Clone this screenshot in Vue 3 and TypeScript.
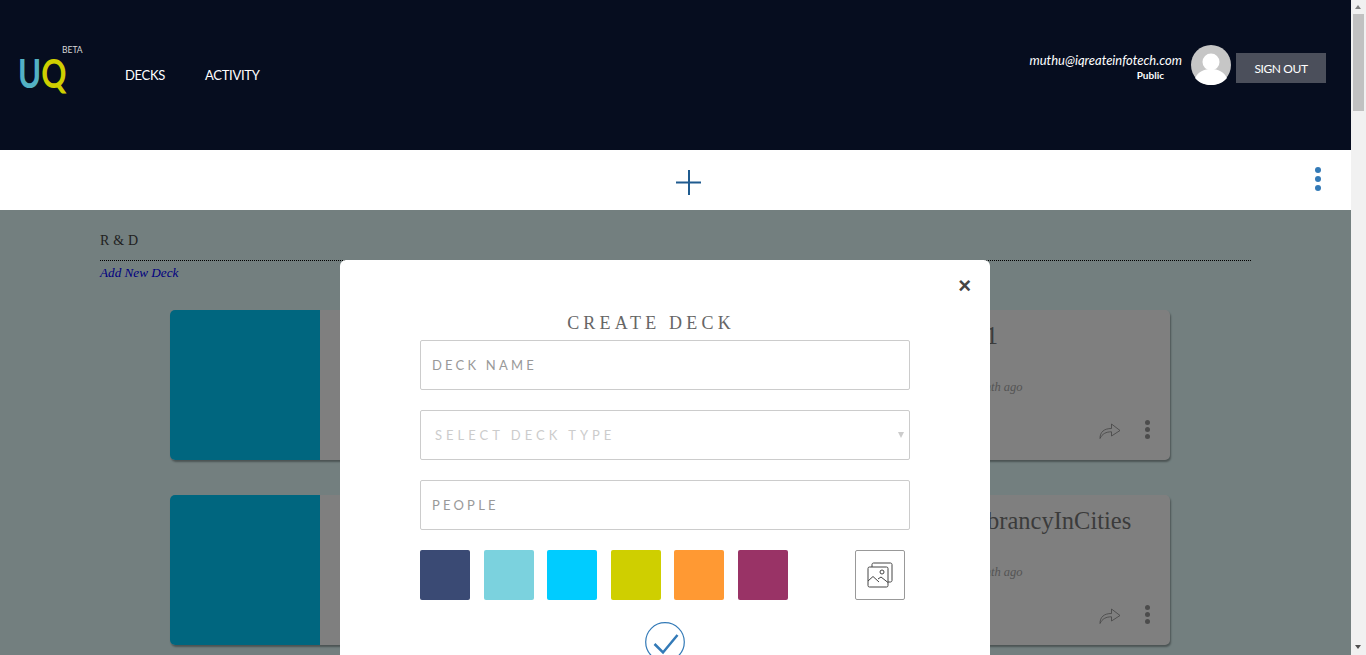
<template>
  <div class="page">
    <div class="main">
      <header class="top-bar">
        <div class="logo">
          <span class="logo-beta">BETA</span>
          <span class="logo-mark"><span class="logo-u">U</span><span class="logo-q">Q</span></span>
        </div>
        <nav class="nav">
          <a v-for="item in navItems" :key="item" class="nav-link">{{ item }}</a>
        </nav>
        <div class="user">
          <div class="user-info">
            <span class="user-mail">muthu@iqreateinfotech.com</span>
            <span class="user-role">Public</span>
          </div>
          <svg class="avatar" viewBox="0 0 40 40">
            <circle cx="20" cy="20" r="20" fill="#c6c6c6" />
            <circle cx="20" cy="17" r="8.5" fill="#fff" />
            <path d="M4 33c3-6 9-9 16-9s13 3 16 9c-3.600 4.400-9.500 7-16 7S7.600 37.400 4 33z" fill="#fff" />
          </svg>
          <button class="sign-out">SIGN OUT</button>
        </div>
      </header>

      <div class="tool-bar">
        <svg class="plus" viewBox="0 0 26 26">
          <path d="M13 0v25M0 12.500h25" stroke="#1f5b8f" stroke-width="2" fill="none" />
        </svg>
        <span class="dots dots-blue"><i></i><i></i><i></i></span>
      </div>

      <section class="content">
        <div class="group-title">R &amp; D</div>
        <a class="add-link">Add New Deck</a>
        <div class="card-list">
          <article v-for="deck in decks" :key="deck.name" class="card">
            <div class="card-thumb"></div>
            <div></div>
            <div class="card-info">
              <h3 class="card-title">{{ deck.name }}</h3>
              <p class="card-time">1 month ago</p>
              <div class="card-actions">
                <svg class="share" viewBox="0 0 22 18">
                  <path d="M1 17.500C1 11 5 7.500 12.500 7.500V3l8.500 6.500-8.500 5.500v-4.200C7 10.800 3.200 12.800 1 17.500z" fill="none" stroke="#888" stroke-width="0.800" />
                </svg>
                <span class="dots dots-dark"><i></i><i></i><i></i></span>
              </div>
            </div>
          </article>
        </div>

        <div class="overlay">
          <div class="modal">
            <span class="close">&times;</span>
            <h2 class="modal-title">CREATE DECK</h2>
            <div class="field field-text">DECK NAME</div>
            <div class="field field-select">
              <span>SELECT DECK TYPE</span>
              <i class="caret"></i>
            </div>
            <div class="field field-text">PEOPLE</div>
            <div class="picker">
              <div class="swatches">
                <span v-for="c in swatches" :key="c" class="swatch" :style="{ background: c }"></span>
              </div>
              <button class="image-btn">
                <svg viewBox="0 0 26 26" width="26" height="26">
                  <g fill="none" stroke="#444" stroke-width="1">
                    <path d="M5 5V2.500C5 1.700 5.700 1 6.500 1h17C24.300 1 25 1.700 25 2.500v16c0 .8-.7 1.500-1.500 1.500H21" />
                    <rect x="1" y="5" width="20" height="20" rx="1.500" />
                    <circle cx="15" cy="10" r="2" />
                    <path d="M1 19l5-4.500 6 5.500M11 17l3-2 7 5.500" />
                  </g>
                </svg>
              </button>
            </div>
            <svg class="confirm" viewBox="0 0 40 40">
              <circle cx="20" cy="20" r="19.300" fill="none" stroke="#337ab7" stroke-width="1.200" />
              <path d="M9.500 22l8.500 8.500L32.500 13" fill="none" stroke="#337ab7" stroke-width="2.500" />
            </svg>
          </div>
        </div>
      </section>
    </div>

    <div class="scrollbar">
      <i class="scroll-arrow-up"></i>
      <span class="scroll-thumb"></span>
      <i class="scroll-arrow"></i>
    </div>
  </div>
</template>

<script setup lang="ts">
const navItems: string[] = ['DECKS', 'ACTIVITY']

const decks = [{ name: 'M1' }, { name: 'VibrancyInCities' }]

const swatches: string[] = ['#3a4a74', '#7bd2de', '#00ccff', '#cfcf00', '#ff9933', '#993366']
</script>

<style>
html,
body {
  margin: 0;
  overflow: hidden;
}
</style>

<style scoped>
.page {
  display: flex;
  height: 100vh;
  overflow: hidden;
  font-family: 'Lato', sans-serif;
}

.main {
  flex: 1;
  min-width: 0;
  display: flex;
  flex-direction: column;
}

.top-bar {
  height: 150px;
  flex: none;
  background: #060d1f;
  display: flex;
  align-items: center;
  padding: 0 25px 0 19px;
  color: #fff;
}

.logo {
  width: 106px;
  display: flex;
  flex-direction: column;
  margin-top: -14px;
}

.logo-beta {
  font-size: 8.500px;
  line-height: 10px;
  margin-left: 43px;
  color: #d8d8d8;
}

.logo-mark {
  display: block;
  margin-left: -1px;
  font-size: 40px;
  line-height: 36px;
  font-weight: 700;
  white-space: nowrap;
  transform: scaleX(0.78);
  transform-origin: left center;
}

.logo-u {
  color: #53b1c4;
}

.logo-q {
  color: #cfcf00;
}

.nav {
  display: flex;
  gap: 40px;
  margin-top: -1px;
}

.nav-link {
  font-size: 13px;
  letter-spacing: -0.3px;
  color: #fff;
}

.user {
  margin-left: auto;
  display: flex;
  align-items: center;
  margin-top: -20px;
}

.user-info {
  display: flex;
  flex-direction: column;
  align-items: flex-end;
  margin-right: 9px;
  margin-top: 4px;
}

.user-mail {
  font-size: 13px;
  line-height: 16px;
  font-style: italic;
}

.user-role {
  font-size: 10px;
  line-height: 14px;
  font-weight: 700;
  margin-right: 18px;
}

.avatar {
  width: 40px;
  height: 40px;
}

.sign-out {
  width: 90px;
  height: 30px;
  margin-left: 5px;
  margin-top: 6px;
  border: 0;
  background: #4b4f5b;
  color: #fff;
  font-family: inherit;
  font-size: 12px;
  letter-spacing: -0.4px;
}

.tool-bar {
  height: 60px;
  flex: none;
  background: #fff;
  display: flex;
  align-items: center;
  justify-content: center;
  position: relative;
}

.plus {
  width: 26px;
  height: 26px;
  margin: 5px 0 0 26px;
}

.dots {
  display: flex;
  flex-direction: column;
  align-items: center;
}

.dots i {
  display: block;
  border-radius: 50%;
}

.dots-blue {
  position: absolute;
  right: 30px;
  top: 17px;
  gap: 3px;
}

.dots-blue i {
  width: 6px;
  height: 6px;
  background: #337ab7;
}

.dots-dark {
  gap: 2px;
}

.dots-dark i {
  width: 5px;
  height: 5px;
  background: #999;
}

.content {
  flex: 1;
  min-height: 0;
  position: relative;
  overflow: hidden;
  background: #e6ffff;
  padding: 23px 100px 0;
  font-family: 'Liberation Serif', serif;
}

.group-title {
  height: 27px;
  font-size: 14px;
  line-height: 16px;
  letter-spacing: 0.2px;
  border-bottom: 1px dotted #000;
  color: #444;
}

.add-link {
  display: block;
  margin-top: 4px;
  font-size: 13.200px;
  line-height: 16px;
  font-style: italic;
  color: #0000ff;
}

.card-list {
  display: flex;
  flex-direction: column;
  gap: 35px;
  margin: 29px 81px 0 70px;
}

.card {
  height: 150px;
  flex: none;
  display: grid;
  grid-template-columns: 150px 1fr 210px;
  background: #fff;
  border-radius: 5px;
  box-shadow: 1px 2px 2px rgba(0, 0, 0, 0.35);
  overflow: hidden;
}

.card-thumb {
  background: #00ccff;
}

.card-info {
  display: flex;
  flex-direction: column;
  color: #777;
}

.card-title {
  margin: 12px 0 0;
  padding-left: 4px;
  font-size: 24.500px;
  line-height: 28px;
  font-weight: 400;
  white-space: nowrap;
}

.card-time {
  margin: 30px 0 0;
  font-size: 12.500px;
  line-height: 14px;
  font-style: italic;
  color: #aaa;
}

.card-actions {
  margin-top: 26px;
  display: flex;
  align-items: center;
  justify-content: flex-end;
  gap: 24px;
  padding-right: 20px;
}

.share {
  width: 22px;
  height: 18px;
}

.overlay {
  position: absolute;
  inset: 0;
  background: rgba(0, 0, 0, 0.5);
  overflow: hidden;
}

.modal {
  position: absolute;
  left: 340px;
  top: 50px;
  width: 650px;
  box-sizing: border-box;
  padding: 53px 80px 30px;
  background: #fff;
  border-radius: 6px;
  display: flex;
  flex-direction: column;
}

.close {
  position: absolute;
  right: 19px;
  top: 12px;
  font-family: 'Liberation Sans', sans-serif;
  font-size: 22px;
  line-height: 28px;
  font-weight: 700;
  color: #444;
}

.modal-title {
  margin: 0;
  padding-right: 28px;
  font-size: 18px;
  line-height: 20px;
  font-weight: 400;
  letter-spacing: 4.200px;
  text-align: center;
  color: #666;
}

.field {
  height: 50px;
  box-sizing: border-box;
  border: 1px solid #ccc;
  border-radius: 2px;
  display: flex;
  align-items: center;
  font-family: 'Lato', sans-serif;
  font-size: 13px;
  margin-top: 20px;
}

.field-text {
  padding-left: 11px;
  color: #999;
  letter-spacing: 3.200px;
}

.modal-title + .field {
  margin-top: 7px;
}

.field-select {
  padding-left: 14px;
  justify-content: space-between;
  color: #ccc;
  letter-spacing: 4px;
}

.caret {
  width: 0;
  height: 0;
  margin-right: 5px;
  border-left: 3px solid transparent;
  border-right: 3px solid transparent;
  border-top: 6px solid #ccc;
}

.picker {
  margin-top: 20px;
  display: flex;
  align-items: center;
  justify-content: space-between;
  padding-right: 5px;
}

.swatches {
  display: flex;
  gap: 13.500px;
}

.swatch {
  width: 50px;
  height: 50px;
  border-radius: 2px;
}

.image-btn {
  width: 50px;
  height: 50px;
  padding: 0;
  border: 1px solid #999;
  border-radius: 2px;
  background: #fff;
  display: flex;
  align-items: center;
  justify-content: center;
}

.confirm {
  width: 40px;
  height: 40px;
  margin: 22px auto 0;
}

.scrollbar {
  width: 15px;
  flex: none;
  background: #f1f1f1;
  position: relative;
  display: flex;
  flex-direction: column;
  align-items: center;
}

.scroll-arrow-up {
  position: absolute;
  top: 5px;
  left: 4px;
  width: 0;
  height: 0;
  border-left: 3.500px solid transparent;
  border-right: 3.500px solid transparent;
  border-bottom: 4px solid #808080;
}

.scroll-thumb {
  width: 11px;
  height: 97px;
  margin-top: 14px;
  background: #c1c1c1;
}

.scroll-arrow {
  position: absolute;
  bottom: 6px;
  left: 4px;
  width: 0;
  height: 0;
  border-left: 3.500px solid transparent;
  border-right: 3.500px solid transparent;
  border-top: 4px solid #505050;
}
</style>
